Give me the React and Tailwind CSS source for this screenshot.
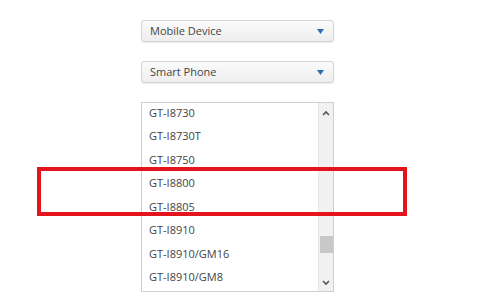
export default function App() {
  const items = [
    "GT-I8730",
    "GT-I8730T",
    "GT-I8750",
    "GT-I8800",
    "GT-I8805",
    "GT-I8910",
    "GT-I8910/GM16",
    "GT-I8910/GM8",
  ];
  const Select = ({ label }) => (
    <div className="flex h-[22px] w-[193px] items-center justify-between rounded-[3px] border border-[#d4d4d4] bg-gradient-to-b from-[#fbfbfb] to-[#eeeeee] pl-[8px] pr-[9px] shadow-[0_1px_1px_rgba(0,0,0,0.08)]">
      <span className="text-[11px] text-[#444]">{label}</span>
      <svg width="7" height="5" viewBox="0 0 7 5">
        <path d="M0 0 L7 0 L3.5 5 Z" fill="#2a6fb5" />
      </svg>
    </div>
  );
  return (
    <div
      className="relative h-[302px] w-[493px] bg-white pl-[141px] pt-[20px]"
      style={{ fontFamily: '"Open Sans", "DejaVu Sans", sans-serif' }}
    >
      <div className="flex flex-col gap-[19px]">
        <Select label="Mobile Device" />
        <Select label="Smart Phone" />
        <div className="flex h-[190px] w-[193px] overflow-hidden border border-[#cfcfcf] bg-white">
          <div className="flex-1 overflow-hidden">
            <div className="mt-[-2px] flex flex-col">
              {items.map((it) => (
                <div
                  key={it}
                  className="flex h-[23.5px] items-center pl-[7px] text-[11px] text-[#444]"
                >
                  {it}
                </div>
              ))}
            </div>
          </div>
          <div className="relative w-[15px] border-l border-[#e6e6e6] bg-[#f1f1f1]">
            <svg className="absolute left-[3px] top-[7px]" width="8" height="6" viewBox="0 0 8 6">
              <path d="M1 5 L4 2 L7 5" stroke="#555" strokeWidth="1.6" fill="none" />
            </svg>
            <div className="absolute left-[1px] top-[133px] h-[17px] w-[13px] bg-[#c8c8c8]" />
            <svg className="absolute left-[3px] top-[177px]" width="8" height="6" viewBox="0 0 8 6">
              <path d="M1 1 L4 4 L7 1" stroke="#555" strokeWidth="1.6" fill="none" />
            </svg>
          </div>
        </div>
      </div>
      <div className="absolute left-[37px] top-[167px] h-[49px] w-[370px] border-[4px] border-[#e4141d]" />
    </div>
  );
}
